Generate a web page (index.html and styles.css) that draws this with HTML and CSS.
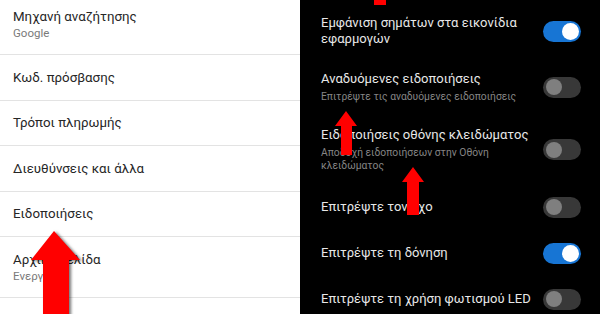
FILE: index.html
```html
<!DOCTYPE html>
<html lang="el">
<head>
  <meta charset="UTF-8">
  <meta name="viewport" content="width=device-width, initial-scale=1.0">
  <title>Ειδοποιήσεις</title>
  <link rel="stylesheet" href="styles.css">
</head>
<body>
<div class="page">
  <div class="panel-light">
    <ul class="settings">
      <li class="item item-first">
        <span class="item-title">Μηχανή αναζήτησης</span>
        <span class="item-sub">Google</span>
      </li>
      <li class="item"><span class="item-title">Κωδ. πρόσβασης</span></li>
      <li class="item"><span class="item-title">Τρόποι πληρωμής</span></li>
      <li class="item"><span class="item-title">Διευθύνσεις και άλλα</span></li>
      <li class="item"><span class="item-title">Ειδοποιήσεις</span></li>
      <li class="item">
        <span class="item-title">Αρχική σελίδα</span>
        <span class="item-sub">Ενεργό</span>
      </li>
    </ul>
  </div>

  <div class="panel-dark">
    <ul class="toggles">
      <li class="row">
        <div class="row-text">
          <span class="row-title">Εμφάνιση σημάτων στα εικονίδια εφαρμογών</span>
        </div>
        <span class="switch on"></span>
      </li>
      <li class="row">
        <div class="row-text">
          <span class="row-title">Αναδυόμενες ειδοποιήσεις</span>
          <span class="row-sub">Επιτρέψτε τις αναδυόμενες ειδοποιήσεις</span>
        </div>
        <span class="switch"></span>
      </li>
      <li class="row">
        <div class="row-text">
          <span class="row-title">Ειδοποιήσεις οθόνης κλειδώματος</span>
          <span class="row-sub">Αποδοχή ειδοποιήσεων στην Οθόνη κλειδώματος</span>
        </div>
        <span class="switch"></span>
      </li>
      <li class="row">
        <div class="row-text"><span class="row-title">Επιτρέψτε τον ήχο</span></div>
        <span class="switch"></span>
      </li>
      <li class="row">
        <div class="row-text"><span class="row-title">Επιτρέψτε τη δόνηση</span></div>
        <span class="switch on"></span>
      </li>
      <li class="row">
        <div class="row-text"><span class="row-title">Επιτρέψτε τη χρήση φωτισμού LED</span></div>
        <span class="switch"></span>
      </li>
    </ul>
  </div>

  <!-- red pointer arrows drawn over the screenshot -->
  <svg class="arrows" width="600" height="314" viewBox="0 0 600 314">
    <polygon class="arrow-big" points="54,231 80,260 69,260 69,320 43,320 43,260 31,260"/>
    <polygon points="374,-2 386,-2 386,5 374,5"/>
    <polygon points="346,111 357,126 352,126 352,155 341,155 341,126 335,126"/>
    <polygon points="413,167 424,182 419,182 419,215 407,215 407,182 402,182"/>
  </svg>
</div>
</body>
</html>
```

FILE: styles.css
```css
body {
  margin: 0;
  padding: 0;
  font-family: Roboto, "Noto Sans", Arial, sans-serif;
  background-color: #000;
}

ul {
  list-style: none;
  margin: 0;
  padding: 0;
}

.page {
  position: relative;
  display: flex;
  width: 600px;
  height: 314px;
  overflow: hidden;
}

.panel-light {
  width: 300px;
  background-color: #ffffff;
}

.panel-dark {
  width: 300px;
  background-color: #000000;
}

/* left: browser settings list */
.item {
  box-sizing: border-box;
  display: flex;
  flex-direction: column;
  justify-content: center;
  height: 45.5px;
  padding-left: 13px;
  border-bottom: 1px solid #e3e3e3;
}

.item:has(.item-sub) {
  height: 61px;
}

.item-first {
  margin-top: -6px;
}

.item-title {
  font-size: 13.3px;
  line-height: 17px;
  color: #262626;
}

.item-sub {
  font-size: 11.5px;
  line-height: 16px;
  color: #7a7a7a;
}

/* right: notification toggles */
.toggles {
  padding-top: 3px;
}

.row {
  box-sizing: border-box;
  display: flex;
  align-items: center;
  min-height: 46px;
  padding: 12px 19px 12px 21px;
}

.row-text {
  flex: 1;
  display: flex;
  flex-direction: column;
  gap: 3px;
  padding-right: 4px;
}

.row-title {
  font-size: 13px;
  line-height: 16px;
  color: #e8e8e8;
}

.row-sub {
  font-size: 10.3px;
  line-height: 13px;
  color: #858585;
}

.switch {
  position: relative;
  flex: none;
  width: 38px;
  height: 21px;
  border-radius: 11px;
  background-color: #383838;
}

.switch::after {
  content: "";
  position: absolute;
  top: 2.5px;
  left: 3px;
  width: 16px;
  height: 16px;
  border-radius: 50%;
  background-color: #7f7f7f;
}

.switch.on {
  background-color: #1775d4;
}

.switch.on::after {
  left: auto;
  right: 2px;
  top: 2px;
  width: 17px;
  height: 17px;
  background-color: #ffffff;
}

.arrows {
  position: absolute;
  top: 0;
  left: 0;
  pointer-events: none;
  fill: #ff0000;
}

.arrow-big {
  filter: drop-shadow(2px 1px 1.5px rgba(0, 0, 0, 0.55));
}
```
